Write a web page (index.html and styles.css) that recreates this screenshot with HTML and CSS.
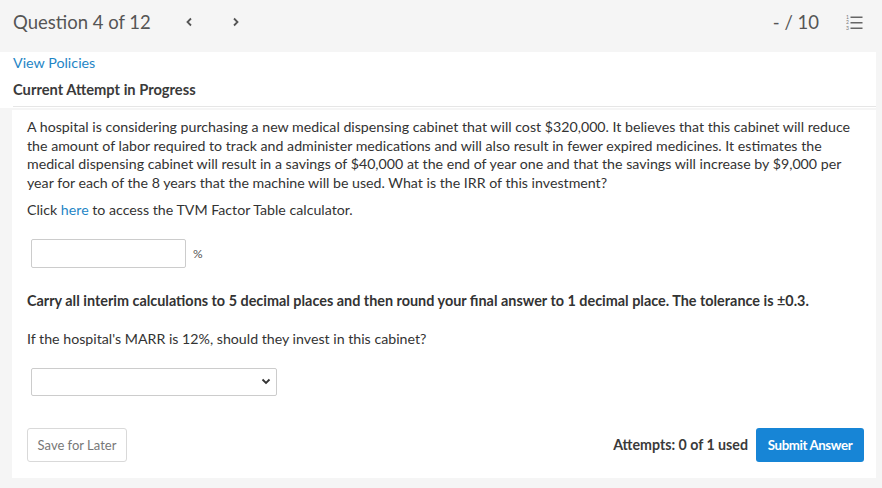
FILE: index.html
```html
<!DOCTYPE html>
<html>
<head>
<meta charset="utf-8">
<link rel="stylesheet" href="styles.css">
</head>
<body>
<div class="page">
  <header class="topbar">
    <div class="title">Question 4 of 12</div>
    <div class="nav">
      <svg class="chev" width="8" height="10" viewBox="0 0 8 10"><path d="M6 1.5 L2.5 5 L6 8.5" fill="none" stroke="#555" stroke-width="1.8"/></svg>
      <svg class="chev" width="8" height="10" viewBox="0 0 8 10"><path d="M2 1.5 L5.5 5 L2 8.5" fill="none" stroke="#555" stroke-width="1.8"/></svg>
    </div>
    <div class="score">- / 10</div>
    <svg class="listicon" width="17" height="16" viewBox="0 0 17 16">
      <text x="0" y="4.5" font-size="5" fill="#777" font-family="Lato">1</text>
      <text x="0" y="10" font-size="5" fill="#777" font-family="Lato">2</text>
      <text x="0" y="15.5" font-size="5" fill="#777" font-family="Lato">3</text>
      <rect x="4.5" y="2.5" width="12" height="1.5" fill="#666"/>
      <rect x="4.5" y="8" width="12" height="1.5" fill="#666"/>
      <rect x="4.5" y="13.5" width="12" height="1.5" fill="#666"/>
    </svg>
  </header>
  <section class="meta">
    <a class="link policies">View Policies</a>
    <div class="attempt">Current Attempt in Progress</div>
    <div class="rule"></div>
  </section>
  <section class="card">
    <p class="q">A hospital is considering purchasing a new medical dispensing cabinet that will cost $320,000. It believes that this cabinet will reduce the amount of labor required to track and administer medications and will also result in fewer expired medicines. It estimates the medical dispensing cabinet will result in a savings of $40,000 at the end of year one and that the savings will increase by $9,000 per year for each of the 8 years that the machine will be used. What is the IRR of this investment?</p>
    <p class="click">Click <a class="link">here</a> to access the TVM Factor Table calculator.</p>
    <div class="answer">
      <input class="box" type="text">
      <span class="pct">%</span>
    </div>
    <p class="carry">Carry all interim calculations to 5 decimal places and then round your final answer to 1 decimal place. The tolerance is ±0.3.</p>
    <p class="marr">If the hospital's MARR is 12%, should they invest in this cabinet?</p>
    <div class="selectbox">
      <svg width="10" height="7" viewBox="0 0 10 7"><path d="M1.5 1.5 L5 5 L8.5 1.5" fill="none" stroke="#333" stroke-width="1.8"/></svg>
    </div>
    <div class="footer">
      <button class="save">Save for Later</button>
      <div class="right">
        <span class="attempts">Attempts: 0 of 1 used</span>
        <button class="submit">Submit Answer</button>
      </div>
    </div>
  </section>
</div>
</body>
</html>
```
FILE: styles.css
```css
html, body {
  margin: 0;
  padding: 0;
  background: #f5f5f5;
  font-family: Lato, "Open Sans", sans-serif;
  color: #333;
}
.page {
  width: 882px;
  height: 488px;
  overflow: hidden;
}
.topbar {
  height: 52px;
  display: flex;
  align-items: center;
  padding: 0 19px 0 13px;
  box-sizing: border-box;
  background: #f5f5f5;
}
.title {
  font-size: 18.5px;
  color: #555;
  margin-top: -8px;
}
.nav {
  display: flex;
  align-items: center;
  gap: 39px;
  margin-left: 34px;
  margin-top: -8px;
}
.score {
  margin-left: auto;
  font-size: 18.5px;
  color: #555;
  margin-top: -8px;
}
.listicon {
  margin-left: 27px;
  margin-top: -8px;
}
.meta {
  background: #fff;
  width: 876px;
  padding: 2px 0 0 13px;
  box-sizing: border-box;
  height: 56px;
}
.link {
  color: #1f86c6;
  text-decoration: none;
}
.policies {
  display: block;
  font-size: 14.3px;
  line-height: 18px;
}
.attempt {
  font-size: 14.7px;
  font-weight: 700;
  color: #3a3a3a;
  margin-top: 8px;
  line-height: 18px;
}
.rule {
  margin-top: 8px;
  height: 1px;
  background: #e6e6e6;
}
.card {
  background: #fff;
  margin: 2px 6px 0 12px;
  padding: 8px 15px 0 15px;
  height: 368px;
  box-sizing: border-box;
  font-size: 14.2px;
  color: #333;
}
.q {
  margin: 0;
  line-height: 18.7px;
}
.click {
  margin: 8px 0 0;
  line-height: 18px;
}
.answer {
  display: flex;
  align-items: center;
  margin-top: 20px;
  margin-left: 4px;
}
.box {
  width: 155px;
  height: 29px;
  box-sizing: border-box;
  border: 1px solid #ccc;
  border-radius: 2px;
  margin: 0;
}
.pct {
  margin-left: 7px;
  font-size: 12px;
  color: #555;
}
.carry {
  margin: 24px 0 0;
  font-weight: 700;
  font-size: 14.4px;
  line-height: 18px;
}
.marr {
  margin: 20px 0 0;
  line-height: 18px;
}
.selectbox {
  margin: 20px 0 0 4px;
  width: 246px;
  height: 28px;
  border: 1px solid #ccc;
  border-radius: 2px;
  box-sizing: border-box;
  display: flex;
  align-items: center;
  justify-content: flex-end;
  padding-right: 5px;
}
.footer {
  display: flex;
  align-items: center;
  justify-content: space-between;
  margin-top: 32px;
  margin-right: -3px;
}
.save {
  height: 34px;
  width: 100px;
  background: #fff;
  border: 1px solid #d9d9d9;
  border-radius: 3px;
  font-family: Lato, sans-serif;
  font-size: 13px;
  color: #777;
  padding: 0;
}
.right {
  display: flex;
  align-items: center;
  gap: 8px;
}
.attempts {
  font-size: 14.2px;
  font-weight: 700;
  color: #3a3a3a;
}
.submit {
  height: 34px;
  width: 108px;
  background: #1785d6;
  border: none;
  border-radius: 3px;
  color: #fff;
  font-family: Lato, sans-serif;
  font-size: 13.3px;
  font-weight: 700;
  letter-spacing: -0.4px;
  padding: 0;
}
```
